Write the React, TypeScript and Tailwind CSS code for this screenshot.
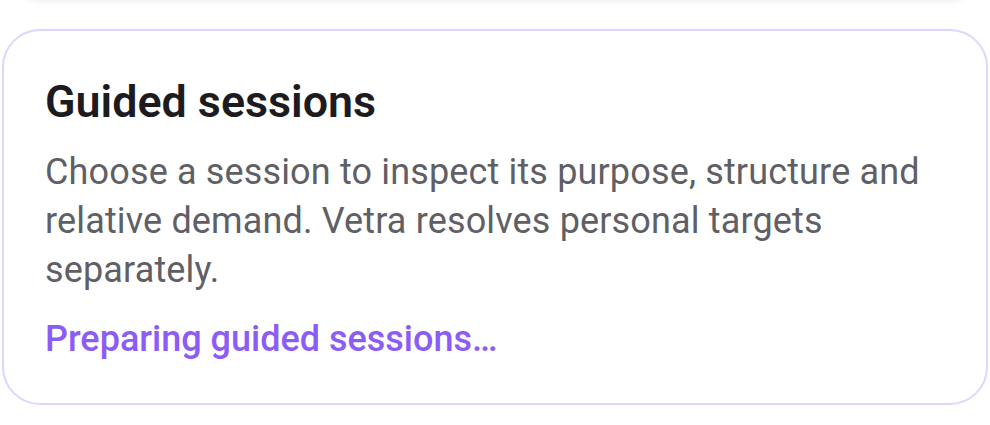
export default function App() {
  return (
    <div
      className="relative h-[425px] w-[990px] overflow-hidden bg-white"
      style={{ fontFamily: "Roboto, 'Noto Sans', sans-serif" }}
    >
      {/* bottom of the previous card, scrolled away */}
      <div className="mx-[6px] -mt-[40px] h-[40px] rounded-b-[36px] bg-white shadow-[0_2px_6px_rgba(0,0,0,0.06)]" />

      <section className="mx-[2px] mt-[29px] rounded-[38px] border-2 border-[#ddd6fe] bg-white pb-[39px] pl-[41px] pr-[38px] pt-[44px]">
        <h2 className="text-[44.8px] font-semibold leading-[54px] text-[#1c1b20]">Guided sessions</h2>
        <p className="mt-[19px] text-[36px] leading-[49px] tracking-[0.15px] text-[#5f5f65]">
          Choose a session to inspect its purpose, structure and relative demand. Vetra resolves
          personal targets separately.
        </p>
        <p className="mt-[20px] text-[36px] font-medium leading-[49px] text-[#8b5cf6]">
          Preparing guided sessions…
        </p>
      </section>
    </div>
  );
}
